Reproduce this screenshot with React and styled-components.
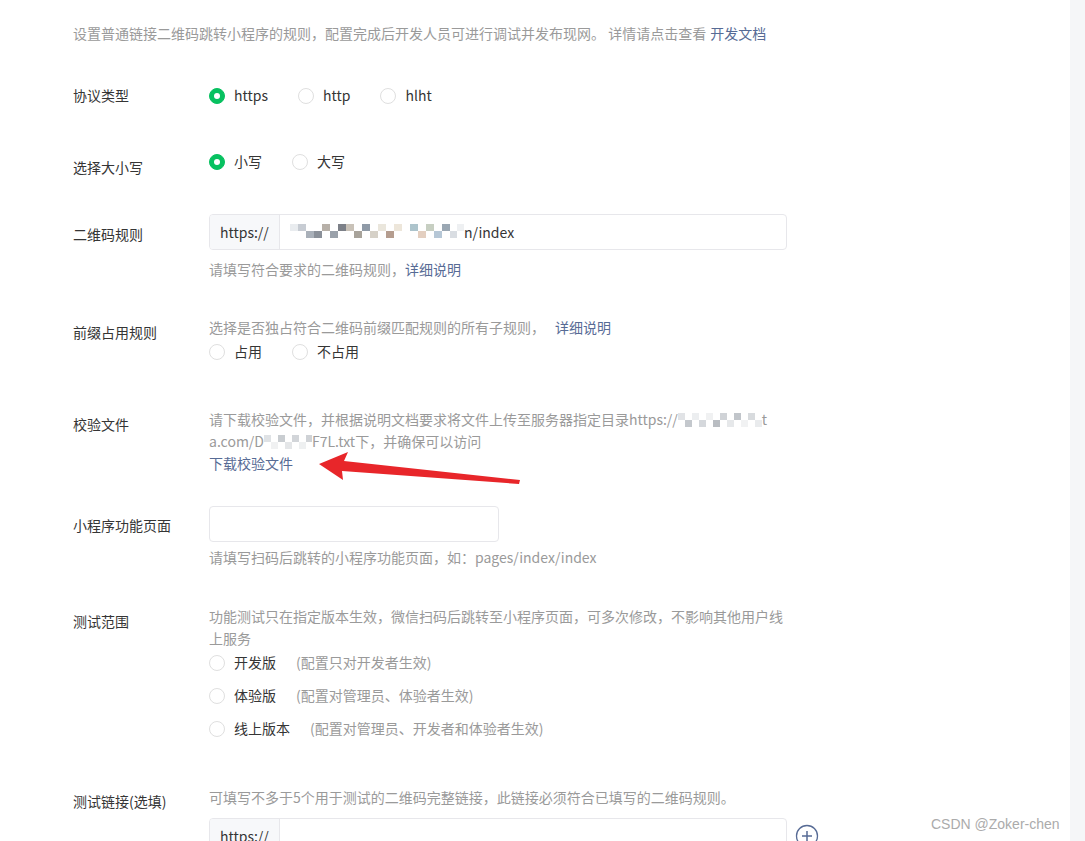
import React from "react";
import styled, { createGlobalStyle } from "styled-components";

const GlobalStyle = createGlobalStyle`
  html, body {
    margin: 0;
    padding: 0;
    overflow: hidden;
    background: #f5f6f8;
  }
  body {
    font-family: "Noto Sans CJK SC", "Noto Sans", sans-serif;
  }
`;

const Main = styled.div`
  position: relative;
  width: 1070px;
  height: 841px;
  overflow: hidden;
  background: #fff;
  box-sizing: border-box;
  padding: 22px 0 0 73px;
  font-size: 14px;
  color: #353535;
`;

const Intro = styled.p`
  margin: 0;
  line-height: 22px;
  color: #9a9a9a;
  white-space: nowrap;
`;

const Link = styled.a`
  color: #576b95;
  text-decoration: none;
  cursor: pointer;
  margin-left: ${(p) => p.$ml || 0}px;
`;

const Row = styled.div`
  display: flex;
  align-items: flex-start;
  margin-top: ${(p) => p.$mt}px;
`;

const Label = styled.div`
  width: 136px;
  flex: none;
  line-height: 22px;
  padding-top: ${(p) => p.$pt || 0}px;
  color: #353535;
`;

const Control = styled.div`
  width: 590px;
  display: flex;
  flex-direction: column;
`;

const Hint = styled.div`
  line-height: 22px;
  color: #9a9a9a;
  margin-top: ${(p) => p.$mt || 0}px;
  white-space: nowrap;
`;

const RadioGroup = styled.div`
  display: flex;
  align-items: center;
  gap: 30px;
  height: 22px;
  margin-top: ${(p) => p.$mt || 0}px;
`;

const RadioList = styled.div`
  display: flex;
  flex-direction: column;
  gap: 7px;
`;

const RadioItem = styled.label`
  display: flex;
  align-items: center;
  height: ${(p) => p.$h || 22}px;
  line-height: 22px;
  cursor: pointer;
  color: #353535;
`;

const RadioCircle = styled.span`
  width: 16px;
  height: 16px;
  box-sizing: border-box;
  border-radius: 50%;
  flex: none;
  margin-right: 9px;
  margin-top: 1px;
  border: 1px solid ${(p) => (p.$checked ? "#07c160" : "#dfdfdf")};
  background: ${(p) => (p.$checked ? "#07c160" : "#fff")};
  display: flex;
  align-items: center;
  justify-content: center;
  &::after {
    content: "";
    display: ${(p) => (p.$checked ? "block" : "none")};
    width: 6px;
    height: 6px;
    border-radius: 50%;
    background: #fff;
  }
`;

const Note = styled.span`
  color: #9a9a9a;
  margin-left: 20px;
`;

const InputBox = styled.div`
  display: flex;
  width: ${(p) => p.$w}px;
  height: 36px;
  box-sizing: border-box;
  border: 1px solid #e7e7eb;
  border-radius: 4px;
  background: #fff;
  overflow: hidden;
  flex: none;
`;

const Prefix = styled.div`
  width: 70px;
  flex: none;
  box-sizing: border-box;
  padding-left: 10px;
  background: #f7f8fa;
  border-right: 1px solid #e7e7eb;
  display: flex;
  align-items: center;
  color: #353535;
`;

const Value = styled.div`
  flex: 1;
  display: flex;
  align-items: center;
  padding-left: 10px;
  color: #353535;
  white-space: nowrap;
`;

/* pixelated mask over private parts of urls */
const Mosaic = styled.span`
  display: inline-flex;
  vertical-align: middle;
  height: 14px;
  margin-top: -2px;
`;

const Tile = styled.span`
  display: inline-block;
  width: ${(p) => p.$w || 8}px;
  height: 7px;
  background: ${(p) => p.$c};
  align-self: ${(p) => (p.$low ? "flex-end" : "flex-start")};
`;

const Para = styled.div`
  line-height: 22px;
  color: #9a9a9a;
  white-space: nowrap;
`;

const InputRow = styled.div`
  display: flex;
  align-items: center;
  gap: 8px;
  margin-top: ${(p) => p.$mt || 0}px;
`;

const PlusButton = styled.button`
  width: 24px;
  height: 24px;
  padding: 0;
  border: none;
  background: none;
  display: flex;
  align-items: center;
  justify-content: center;
  cursor: pointer;
`;

const Overlay = styled.svg`
  position: absolute;
  left: 0;
  top: 0;
  pointer-events: none;
`;

const Watermark = styled.div`
  position: absolute;
  left: 931px;
  top: 816px;
  font-family: "Liberation Sans", Arial, sans-serif;
  font-size: 14px;
  color: #ababab;
  white-space: nowrap;
`;

const ruleMask = [
  ["#e9ecef", 8], ["#c7ccd3", 8], ["#a9b0b9", 8, true], ["#8a9099", 8, true],
  ["#b7b0a8", 8], ["#9aa1aa", 8, true], ["#7c8088", 8], ["#c9c2b8", 8],
  ["#a8a39a", 8, true], ["#8f9aa7", 8], ["#d6d1c8", 8, true], ["#eae6dc", 8],
  ["#b59d8f", 8, true], ["#ede6da", 8], ["#ffffff", 8], ["#adc4cc", 8],
  ["#e3cfc0", 8, true], ["#c7cfc2", 8], ["#b6c7d6", 8, true], ["#9aa7b3", 8],
  ["#d9dde2", 7, true], ["#eef0f2", 7],
];

const fileMaskA = [
  ["#e1e3e6", 7], ["#c4c8cd", 7, true], ["#eceef0", 7], ["#d5d8dc", 7, true],
  ["#f0f1f2", 7], ["#b9bdc2", 7, true], ["#d0d3d7", 7], ["#e6e8ea", 7, true],
  ["#c1c5ca", 7], ["#f1f2f3", 7, true], ["#d8dbde", 7], ["#e9ebed", 7, true],
];

const fileMaskB = [
  ["#dfe2e5", 7], ["#f0f1f2", 7, true], ["#c9cdd1", 7], ["#e4e6e8", 7, true],
  ["#d2d5d9", 7], ["#eef0f1", 7, true], ["#cfd2d6", 6],
];

function Mask({ tiles }) {
  return (
    <Mosaic>
      {tiles.map(([c, w, low], i) => (
        <Tile key={i} $c={c} $w={w} $low={low} />
      ))}
    </Mosaic>
  );
}

function Radio({ checked, children, h }) {
  return (
    <RadioItem $h={h}>
      <RadioCircle $checked={checked} />
      {children}
    </RadioItem>
  );
}

export default function App() {
  return (
    <Main>
      <GlobalStyle />
      <Intro>
        设置普通链接二维码跳转小程序的规则，配置完成后开发人员可进行调试并发布现网。 详情请点击查看
        <Link $ml={4}>开发文档</Link>
      </Intro>

      <Row $mt={40}>
        <Label>协议类型</Label>
        <Control>
          <RadioGroup>
            <Radio checked>https</Radio>
            <Radio>http</Radio>
            <Radio>hlht</Radio>
          </RadioGroup>
        </Control>
      </Row>

      <Row $mt={44}>
        <Label $pt={6}>选择大小写</Label>
        <Control>
          <RadioGroup>
            <Radio checked>小写</Radio>
            <Radio>大写</Radio>
          </RadioGroup>
        </Control>
      </Row>

      <Row $mt={36}>
        <Label $pt={9}>二维码规则</Label>
        <Control>
          <InputBox $w={578}>
            <Prefix>https://</Prefix>
            <Value>
              <Mask tiles={ruleMask} />
              <span>n/index</span>
            </Value>
          </InputBox>
          <Hint $mt={8}>
            请填写符合要求的二维码规则，<Link>详细说明</Link>
          </Hint>
        </Control>
      </Row>

      <Row $mt={36}>
        <Label $pt={5}>前缀占用规则</Label>
        <Control>
          <Hint>
            选择是否独占符合二维码前缀匹配规则的所有子规则，<Link $ml={10}>详细说明</Link>
          </Hint>
          <RadioGroup $mt={2}>
            <Radio>占用</Radio>
            <Radio>不占用</Radio>
          </RadioGroup>
        </Control>
      </Row>

      <Row $mt={46}>
        <Label $pt={5}>校验文件</Label>
        <Control>
          <Para>
            请下载校验文件，并根据说明文档要求将文件上传至服务器指定目录https://
            <Mask tiles={fileMaskA} />t
          </Para>
          <Para>
            a.com/D<Mask tiles={fileMaskB} />F7L.txt下，并确保可以访问
          </Para>
          <Para>
            <Link>下载校验文件</Link>
          </Para>
        </Control>
      </Row>

      <Row $mt={32}>
        <Label $pt={8}>小程序功能页面</Label>
        <Control>
          <InputBox $w={290} />
          <Hint $mt={4}>请填写扫码后跳转的小程序功能页面，如：pages/index/index</Hint>
        </Control>
      </Row>

      <Row $mt={37}>
        <Label $pt={5}>测试范围</Label>
        <Control>
          <Para>功能测试只在指定版本生效，微信扫码后跳转至小程序页面，可多次修改，不影响其他用户线</Para>
          <Para>上服务</Para>
          <RadioList>
            <Radio h={26}>
              开发版<Note>(配置只对开发者生效)</Note>
            </Radio>
            <Radio h={26}>
              体验版<Note>(配置对管理员、体验者生效)</Note>
            </Radio>
            <Radio h={26}>
              线上版本<Note>(配置对管理员、开发者和体验者生效)</Note>
            </Radio>
          </RadioList>
        </Control>
      </Row>

      <Row $mt={45}>
        <Label $pt={4}>测试链接(选填)</Label>
        <Control>
          <Hint>可填写不多于5个用于测试的二维码完整链接，此链接必须符合已填写的二维码规则。</Hint>
          <InputRow $mt={10}>
            <InputBox $w={578}>
              <Prefix>https://</Prefix>
              <Value />
            </InputBox>
            <PlusButton>
              <svg width="24" height="24" viewBox="0 0 24 24">
                <circle cx="12" cy="12" r="10.5" fill="none" stroke="#576b95" strokeWidth="1.3" />
                <path d="M12 7v10M7 12h10" stroke="#576b95" strokeWidth="1.5" />
              </svg>
            </PlusButton>
          </InputRow>
        </Control>
      </Row>

      <Overlay width="1070" height="841">
        <polygon
          points="319,464 348,452 344,461 520,480 519,484 342,471 343,480"
          fill="#e8262a"
        />
      </Overlay>
      <Watermark>CSDN @Zoker-chen</Watermark>
    </Main>
  );
}
